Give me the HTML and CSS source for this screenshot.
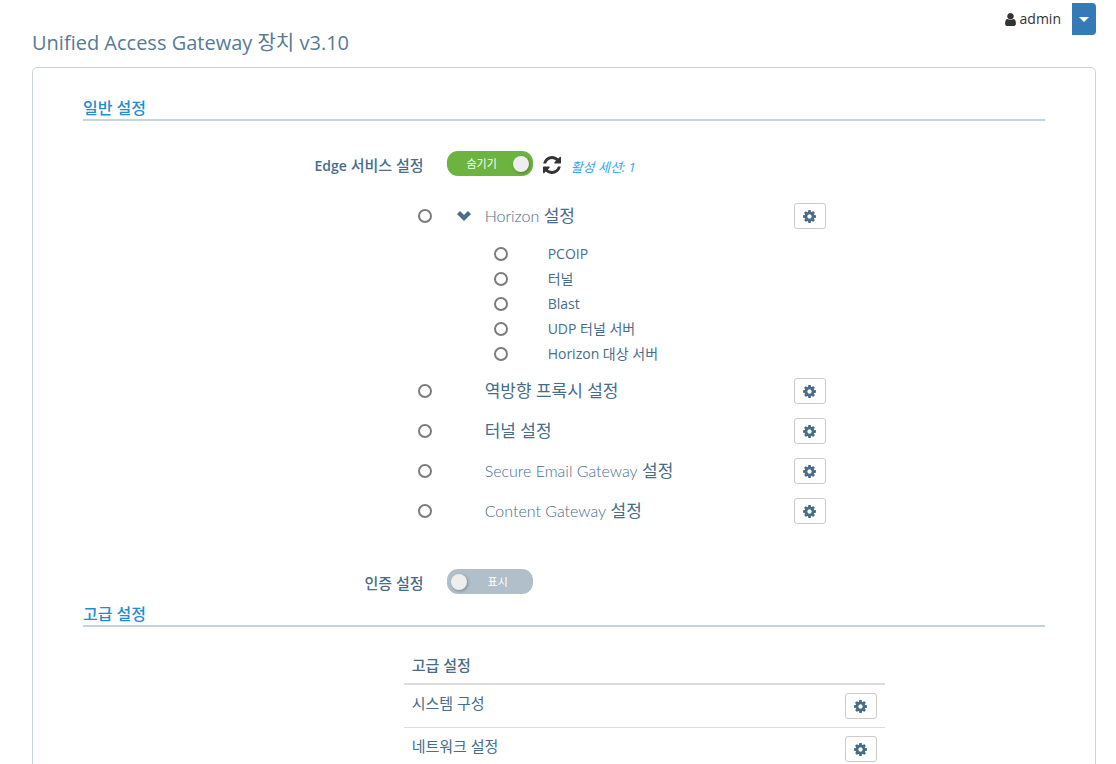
FILE: index.html
```html
<!DOCTYPE html>
<html lang="ko">
<head>
    <meta charset="utf-8">
    <title>Unified Access Gateway</title>
    <link rel="stylesheet" href="styles.css">
</head>

<body>
    <!-- Shared icons -->
    <svg class="sprite" aria-hidden="true">
        <symbol id="icon-cog" viewBox="0 -128 1536 1536">
            <path d="M1024 640q0-106-75-181t-181-75-181 75-75 181 75 181 181 75 181-75 75-181zm512-109v222q0 12-8 23t-20 13l-185 28q-19 54-39 91 35 50 107 138 10 12 10 25t-9 23q-27 37-99 108t-94 71q-12 0-26-9l-138-108q-44 23-91 38-16 136-29 186-7 28-36 28h-222q-14 0-24.500-8.500t-11.500-21.500l-28-184q-49-16-90-37l-141 107q-10 9-25 9-14 0-25-11-126-114-165-168-7-10-7-23 0-12 8-23 15-21 51-66.500t54-70.500q-27-50-41-99l-183-27q-13-2-21-12.500t-8-23.500v-222q0-12 8-23t19-13l186-28q14-46 39-92-40-57-107-138-10-12-10-24 0-10 9-23 26-36 98.500-107.500t94.500-71.500q13 0 26 10l138 107q44-23 91-38 16-136 29-186 7-28 36-28h222q14 0 24.500 8.500t11.500 21.500l28 184q49 16 90 37l142-107q9-9 24-9 13 0 25 10 129 119 165 170 7 8 7 22 0 12-8 23-15 21-51 66.500t-54 70.500q26 50 41 98l183 28q13 2 21 12.500t8 23.500z"/>
        </symbol>
    </svg>

    <header class="page-header">
        <h1>Unified Access Gateway 장치 v3.10</h1>
        <div class="user-menu">
            <svg class="icon-user" viewBox="0 0 1280 1536" aria-hidden="true"><path d="M1280 1271q0 109-62.500 187t-150.500 78h-854q-88 0-150.500-78t-62.500-187q0-85 8.500-160.500t31.500-152 58.500-131 94-89 134.500-34.500q131 128 313 128t313-128q76 0 134.500 34.500t94 89 58.500 131 31.500 152 8.500 160.500zm-256-887q0 159-112.500 271.500t-271.500 112.500-271.500-112.500-112.500-271.500 112.500-271.500 271.500-112.500 271.500 112.500 112.500 271.500z"/></svg>
            <span class="user-name">admin</span>
            <button type="button" class="btn-user" aria-label="사용자 메뉴"><span class="caret"></span></button>
        </div>
    </header>

    <main class="panel">
        <h2>일반 설정</h2>

        <div class="setting-row">
            <label class="setting-label" for="edge"><span class="latin">Edge</span> 서비스 설정</label>
            <label class="toggle on"><span>숨기기</span><input type="checkbox" id="edge" checked></label>
            <button type="button" class="btn-refresh" aria-label="새로 고침">
                <svg viewBox="0 0 1536 1536"><path d="M1511 928q0 5-1 7-64 268-268 434.500t-478 166.500q-146 0-282.500-55t-243.500-157l-129 129q-19 19-45 19t-45-19-19-45v-448q0-26 19-45t45-19h448q26 0 45 19t19 45-19 45l-137 137q71 66 161 102t187 36q134 0 250-65t186-179q11-17 53-117 8-23 30-23h192q13 0 22.500 9.500t9.500 22.500zm25-800v448q0 26-19 45t-45 19h-448q-26 0-45-19t-19-45 19-45l138-138q-148-137-349-137-134 0-250 65t-186 179q-11 17-53 117-8 23-30 23h-199q-13 0-22.500-9.500t-9.500-22.500v-7q65-268 270-434.500t480-166.500q146 0 284 55.500t245 156.500l130-129q19-19 45-19t45 19 19 45z"/></svg>
            </button>
            <a class="sessions" href="#">활성 세션: 1</a>
        </div>

        <div class="services">
            <div class="service">
                <input type="radio" id="horizon">
                <button type="button" class="btn-expand" aria-label="펼치기">
                    <svg viewBox="0 0 14 10"><path d="M0 3L3 0l4 4 4-4 3 3-7 7z"/></svg>
                </button>
                <label for="horizon"><span class="thin">Horizon</span> 설정</label>
                <button type="button" class="btn-gear" aria-label="Horizon 설정"><svg><use href="#icon-cog"/></svg></button>
            </div>

            <ul class="sub-services">
                <li><input type="radio" id="pcoip"><label for="pcoip">PCOIP</label></li>
                <li><input type="radio" id="tunnel-h"><label for="tunnel-h">터널</label></li>
                <li><input type="radio" id="blast"><label for="blast">Blast</label></li>
                <li><input type="radio" id="udp"><label for="udp">UDP 터널 서버</label></li>
                <li><input type="radio" id="dest"><label for="dest">Horizon 대상 서버</label></li>
            </ul>

            <div class="service">
                <input type="radio" id="proxy">
                <span class="no-expand"></span>
                <label for="proxy">역방향 프록시 설정</label>
                <button type="button" class="btn-gear" aria-label="역방향 프록시 설정"><svg><use href="#icon-cog"/></svg></button>
            </div>
            <div class="service">
                <input type="radio" id="tunnel">
                <span class="no-expand"></span>
                <label for="tunnel">터널 설정</label>
                <button type="button" class="btn-gear" aria-label="터널 설정"><svg><use href="#icon-cog"/></svg></button>
            </div>
            <div class="service">
                <input type="radio" id="seg">
                <span class="no-expand"></span>
                <label for="seg"><span class="thin">Secure Email Gateway</span> 설정</label>
                <button type="button" class="btn-gear" aria-label="Secure Email Gateway 설정"><svg><use href="#icon-cog"/></svg></button>
            </div>
            <div class="service">
                <input type="radio" id="content">
                <span class="no-expand"></span>
                <label for="content"><span class="thin">Content Gateway</span> 설정</label>
                <button type="button" class="btn-gear" aria-label="Content Gateway 설정"><svg><use href="#icon-cog"/></svg></button>
            </div>
        </div>

        <div class="setting-row">
            <label class="setting-label" for="auth">인증 설정</label>
            <label class="toggle"><input type="checkbox" id="auth"><span>표시</span></label>
        </div>

        <h2>고급 설정</h2>

        <table class="advanced">
            <thead>
                <tr><th colspan="2">고급 설정</th></tr>
            </thead>
            <tbody>
                <tr>
                    <td>시스템 구성</td>
                    <td class="action"><button type="button" class="btn-gear" aria-label="시스템 구성"><svg><use href="#icon-cog"/></svg></button></td>
                </tr>
                <tr>
                    <td>네트워크 설정</td>
                    <td class="action"><button type="button" class="btn-gear" aria-label="네트워크 설정"><svg><use href="#icon-cog"/></svg></button></td>
                </tr>
            </tbody>
        </table>
    </main>
</body>
</html>
```

FILE: styles.css
```css
* {
    box-sizing: border-box;
}
body {
    margin: 0;
    padding: 3px 20px 20px 32px;
    font-family: "Open Sans", "Noto Sans CJK KR", sans-serif;
    font-size: 14px;
    line-height: 20px;
    color: #486d8a;
    background-color: #fff;
}
button {
    padding: 0;
    border: none;
    background: none;
    cursor: pointer;
}
svg {
    display: block;
    fill: currentColor;
}
.sprite {
    display: none;
}

/* Header */
.page-header {
    display: flex;
    justify-content: space-between;
    align-items: flex-start;
    height: 64px;
}
h1 {
    margin: 26px 0 0;
    font-size: 20px;
    font-weight: 400;
    line-height: 27px;
    color: #587a94;
}
.user-menu {
    display: flex;
    align-items: center;
    color: #333;
}
.icon-user {
    width: 11px;
    height: 13px;
}
.user-name {
    margin: 0 11px 0 4px;
}
.btn-user {
    display: flex;
    align-items: center;
    justify-content: center;
    width: 24px;
    height: 32px;
    background-color: #337ab7;
    border-radius: 0 4px 4px 0;
}
.caret {
    border-top: 5px solid #fff;
    border-left: 5px solid transparent;
    border-right: 5px solid transparent;
}

/* Panel */
.panel {
    padding: 29px 50px;
    border: 1px solid #c5d3dd;
    border-radius: 5px;
}
h2 {
    margin: 0;
    font-size: 16px;
    font-weight: 500;
    line-height: 22px;
    color: #1f8dd0;
    border-bottom: 2px solid #c5d3dd;
}
.setting-row {
    display: flex;
    align-items: center;
    height: 25px;
    margin-top: 30px;
}
.setting-label {
    width: calc(100% / 3 + 20px);
    margin-right: 23px;
    padding-top: 3px;
    font-size: 15px;
    font-weight: 500;
    text-align: right;
}
.latin {
    font-size: 14px;
    font-weight: 600;
}

/* Toggle: the checkbox itself is the knob */
.toggle {
    display: flex;
    align-items: center;
    width: 86px;
    height: 25px;
    padding: 0 4px;
    border-radius: 11px;
    background-color: #b1bfcb;
    color: #fff;
    font-size: 11px;
    cursor: pointer;
}
.toggle.on {
    background-color: #6cb33f;
}
.toggle span {
    flex: 1;
    text-align: center;
}
.toggle input {
    appearance: none;
    width: 16px;
    height: 16px;
    margin: 0;
    border-radius: 50%;
    background-color: #eee;
    box-shadow: 1px 1px 3px rgba(0, 0, 0, 0.3);
}
.btn-refresh {
    margin: 2px 10px 0;
    color: #333;
}
.btn-refresh svg {
    width: 18px;
    height: 18px;
}
.sessions {
    padding-top: 6px;
    font-size: 13px;
    font-style: italic;
    color: #34a7f0;
    text-decoration: none;
}

/* Edge services */
.services {
    width: calc(50% - 73px);
    margin: 20px 0 38px calc(100% / 3 + 14px);
}
.service {
    display: flex;
    align-items: center;
    height: 40px;
    font-size: 17px;
}
.service label {
    flex: 1;
    font-family: Lato, "Noto Sans CJK KR", sans-serif;
}
.thin {
    font-size: 16px;
    font-weight: 300;
}
input[type="radio"] {
    appearance: none;
    width: 14px;
    height: 14px;
    margin: 0;
    border: 2px solid #7c7c7c;
    border-radius: 50%;
}
.btn-expand,
.no-expand {
    width: 14px;
    margin: 0 14px 0 25px;
    color: #486d8a;
}
.btn-expand svg {
    width: 14px;
    height: 10px;
}
.btn-gear {
    display: flex;
    align-items: center;
    justify-content: center;
    width: 32px;
    height: 26px;
    border: 1px solid #ccc;
    border-radius: 3px;
    background-color: #fff;
    color: #486d8a;
}
.btn-gear svg {
    width: 13px;
    height: 13px;
}
.sub-services {
    margin: 5px 0;
    padding: 0 0 0 76px;
    list-style: none;
}
.sub-services li {
    display: flex;
    align-items: center;
    gap: 40px;
    height: 25px;
}

/* Advanced settings */
.advanced {
    width: 50%;
    margin: 20px 0 0 calc(100% / 3);
    border-collapse: collapse;
    font-size: 15px;
}
.advanced th,
.advanced td {
    padding: 8px;
    text-align: left;
    vertical-align: top;
}
.advanced th {
    font-weight: 500;
    border-bottom: 2px solid #ddd;
}
.advanced tbody tr + tr td {
    border-top: 1px solid #ddd;
}
.advanced .action {
    width: 48px;
}
.setting-row + h2 {
    margin-top: 9px;
}
```
